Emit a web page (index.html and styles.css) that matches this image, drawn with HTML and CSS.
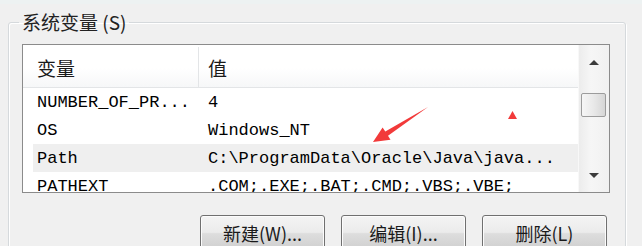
FILE: index.html
```html
<!DOCTYPE html>
<html lang="zh-CN">
<head>
    <meta charset="UTF-8">
    <meta name="viewport" content="width=device-width, initial-scale=1.0">
    <title>系统变量</title>
    <link rel="stylesheet" href="styles.css">
</head>
<body>

<div class="top-edge"></div>

<fieldset class="group">
    <legend>系统变量 (S)</legend>

    <div class="list">
        <div class="list-body">
            <div class="list-header">
                <div class="col-name">变量</div>
                <div class="col-value">值</div>
            </div>
            <div class="row">
                <div class="col-name">NUMBER_OF_PR...</div>
                <div class="col-value">4</div>
            </div>
            <div class="row">
                <div class="col-name">OS</div>
                <div class="col-value">Windows_NT</div>
            </div>
            <div class="row hover">
                <div class="col-name">Path</div>
                <div class="col-value">C:\ProgramData\Oracle\Java\java...</div>
            </div>
            <div class="row">
                <div class="col-name">PATHEXT</div>
                <div class="col-value">.COM;.EXE;.BAT;.CMD;.VBS;.VBE;</div>
            </div>
        </div>
        <div class="scrollbar">
            <div class="scroll-btn"><span class="arrow-up"></span></div>
            <div class="thumb"></div>
            <div class="scroll-space"></div>
            <div class="scroll-btn"><span class="arrow-down"></span></div>
        </div>
    </div>

    <div class="buttons">
        <button class="win-button">新建(W)...</button>
        <button class="win-button">编辑(I)...</button>
        <button class="win-button">删除(L)</button>
    </div>
</fieldset>

<!-- 红色标注箭头 -->
<svg class="annotation" width="642" height="246" viewBox="0 0 642 246">
    <polygon points="428,107 388,135.7 390.5,139.8 373,142 382.6,127.4 385.3,131.5" fill="#f23a3a"/>
    <polygon points="508,119 517,119 512.5,111" fill="#f23a3a"/>
</svg>

</body>
</html>
```

FILE: styles.css
```css
body {
    margin: 0;
    height: 246px;
    overflow: hidden;
    background-color: #f0f0f0;
    font-family: "Noto Sans CJK SC", "DejaVu Sans", sans-serif;
    color: #1a1a1a;
    position: relative;
}
.top-edge {
    height: 4px;
    background: #edf2f2;
}
.group {
    margin: 6px 0 0 8px;
    width: 588px;
    padding: 0 15px 20px 13px;
    border: 1px solid #d5d9dc;
    border-radius: 3px;
    box-shadow: inset 1px 1px 0 #fff, 1px 1px 0 #fff;
}
.group legend {
    padding: 0 3px;
    margin-left: -3px;
    font-size: 19px;
    line-height: 24px;
    color: #222;
}
.list {
    margin-top: 10px;
    height: 147px;
    border: 1px solid #8b8b8b;
    background: #fff;
    display: flex;
}
.list-body {
    flex: 1;
    overflow: hidden;
}
.list-header {
    display: flex;
    height: 40px;
    padding-top: 2px;
    align-items: center;
    background: linear-gradient(#ffffff 55%, #f6f7f8);
    border-bottom: 1px solid #e3e5e7;
    font-size: 19px;
}
.list-header .col-name {
    width: 161px;
    padding-left: 14px;
    align-self: stretch;
    display: flex;
    align-items: center;
    border-right: 1px solid #e3e5e7;
}
.list-header .col-value {
    padding-left: 9px;
}
.row {
    display: flex;
    align-items: center;
    height: 28px;
    margin-left: 10px;
    font-family: "Liberation Mono", "DejaVu Sans Mono", monospace;
    font-size: 17px;
    color: #000;
    white-space: nowrap;
}
.row.hover {
    background: #efefef;
}
.row .col-name {
    width: 161px;
    padding-left: 4px;
}
.row .col-value {
    padding-left: 10px;
}
.scrollbar {
    width: 30px;
    display: flex;
    flex-direction: column;
    background: linear-gradient(90deg, #ececec, #f6f6f6 40%, #f1f1f1);
    border-left: 1px solid #f8f8f8;
}
.scroll-btn {
    height: 34px;
    display: flex;
    align-items: center;
    justify-content: center;
}
.arrow-up {
    width: 0;
    height: 0;
    border-left: 5px solid transparent;
    border-right: 5px solid transparent;
    border-bottom: 5px solid #3c3c3c;
}
.arrow-down {
    width: 0;
    height: 0;
    border-left: 5px solid transparent;
    border-right: 5px solid transparent;
    border-top: 5px solid #3c3c3c;
}
.thumb {
    margin: 14px 0 0 2px;
    width: 23px;
    height: 22px;
    border: 1px solid #9c9c9c;
    border-radius: 2px;
    background: linear-gradient(90deg, #f6f6f6, #e9e9e9 50%, #d6d6d6);
}
.scroll-space {
    flex: 1;
}
.buttons {
    margin-top: 22px;
    display: flex;
    justify-content: flex-end;
    gap: 16px;
    padding-right: 3px;
}
.win-button {
    width: 125px;
    height: 36px;
    border: 1px solid #707070;
    border-radius: 3px;
    background: linear-gradient(#f4f4f4, #ebebeb 48%, #dddddd 52%, #cfcfcf);
    box-shadow: inset 0 0 0 1px #fcfcfc;
    font-family: "Noto Sans CJK SC", "DejaVu Sans", sans-serif;
    font-size: 18px;
    color: #1a1a1a;
    padding: 0;
}
.annotation {
    position: absolute;
    top: 0;
    left: 0;
    pointer-events: none;
}
```
